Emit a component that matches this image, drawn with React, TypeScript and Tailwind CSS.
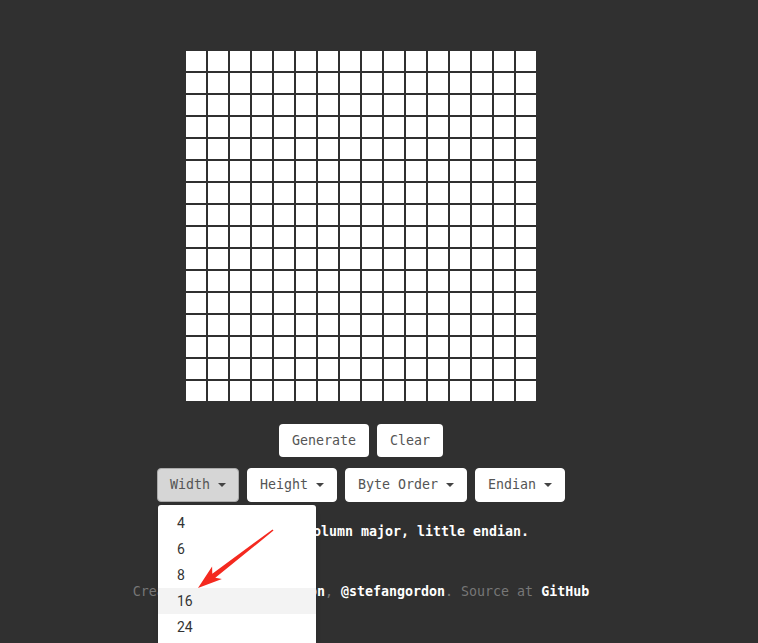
import { useState } from "react";

const SIZE = 16;
const widths = [4, 6, 8, 16, 24, 32, 48, 64];

function Caret() {
  return (
    <span className="ml-2 inline-block h-0 w-0 border-x-[4px] border-t-[4px] border-x-transparent border-t-[#444]" />
  );
}

function DropButton({ label, active = false }: { label: string; active?: boolean }) {
  return (
    <button
      type="button"
      className={`flex h-[34px] items-center rounded-[4px] border px-[12px] text-[#555] ${
        active ? "border-[#aaa] bg-[#d6d6d6]" : "border-white bg-white"
      }`}
    >
      {label}
      <Caret />
    </button>
  );
}

export default function App() {
  const [cells, setCells] = useState<boolean[]>(() => Array(SIZE * SIZE).fill(false));

  const toggle = (i: number) =>
    setCells((prev) => prev.map((v, j) => (j === i ? !v : v)));

  return (
    <div className="relative h-[643px] w-[758px] overflow-hidden bg-[#303030] font-['DejaVu_Sans_Mono','Liberation_Mono',monospace] text-[13.3px]">
      <div className="flex w-[722px] flex-col items-center pt-[51px]">
        {/* pixel grid */}
        <div className="grid grid-cols-[repeat(16,20px)] gap-[2px]">
          {cells.map((on, i) => (
            <div
              key={i}
              onClick={() => toggle(i)}
              className={`h-[20px] w-[20px] ${on ? "bg-black" : "bg-white"}`}
            />
          ))}
        </div>

        <div className="mt-[23px] flex gap-[8px]">
          <button type="button" className="h-[33px] rounded-[4px] bg-white px-[13px] text-[#555]">
            Generate
          </button>
          <button type="button" className="h-[33px] rounded-[4px] bg-white px-[13px] text-[#555]">
            Clear
          </button>
        </div>

        <div className="mt-[11px] flex gap-[8px]">
          <div className="relative">
            <DropButton label="Width" active />
            <ul className="absolute left-[1px] top-[37px] z-10 w-[158px] rounded-[3px] bg-white pt-[5px] font-['Roboto','Liberation_Sans',sans-serif] text-[14px] text-[#333] shadow-md">
              {widths.map((w) => (
                <li
                  key={w}
                  className={`flex h-[26px] items-center pl-[19px] ${w === 16 ? "bg-[#f3f3f3]" : ""}`}
                >
                  {w}
                </li>
              ))}
            </ul>
          </div>
          <DropButton label="Height" />
          <DropButton label="Byte Order" />
          <DropButton label="Endian" />
        </div>

        <p className="mt-[20px] font-bold text-white">Pixels are in column major, little endian.</p>

        <p className="mt-[40px] text-[#777]">
          Created by <span className="font-bold text-white">Stefan Gordon</span>,{" "}
          <span className="font-bold text-white">@stefangordon</span>. Source at{" "}
          <span className="font-bold text-white">GitHub</span>
        </p>
      </div>

      {/* annotation arrow */}
      <svg className="pointer-events-none absolute left-0 top-0 z-20" width="758" height="643">
        <polygon
          fill="#f4291f"
          points="272.5,529.4 212.3,573.8 212.1,566.4 198,588 221.9,579 215.3,577.8 273.5,530.6"
        />
      </svg>
    </div>
  );
}
